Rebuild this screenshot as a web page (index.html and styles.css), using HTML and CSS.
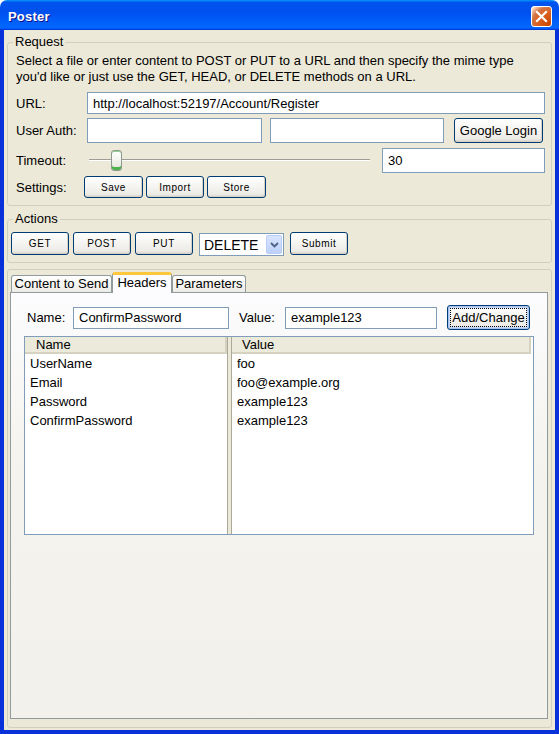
FILE: index.html
```html
<!DOCTYPE html>
<html lang="en">
<head>
<meta charset="utf-8">
<title>Poster</title>
<link rel="stylesheet" href="styles.css">
</head>
<body>
<div class="window">
  <div class="titlebar">
    <span class="title">Poster</span>
    <div class="close">
      <svg width="13" height="13" viewBox="0 0 13 13"><path d="M2 2 L11 11 M11 2 L2 11" stroke="#fff" stroke-width="2.2" stroke-linecap="square" fill="none"/></svg>
    </div>
  </div>
  <div class="frame">
    <fieldset class="group request">
      <legend class="legend-request">Request</legend>
      <p class="intro">Select a file or enter content to POST or PUT to a URL and then specify the mime type<br>you'd like or just use the GET, HEAD, or DELETE methods on a URL.</p>
      <div class="row url-row">
        <label class="lbl">URL:</label>
        <input class="field url-field" type="text" value="http://localhost:52197/Account/Register">
      </div>
      <div class="row auth-row">
        <label class="lbl">User Auth:</label>
        <input class="field auth1" type="text" value="">
        <input class="field auth2" type="text" value="">
        <button class="btn big google">Google Login</button>
      </div>
      <div class="row timeout-row">
        <label class="lbl">Timeout:</label>
        <div class="slider"><span class="thumb"></span></div>
        <input class="field timeout-field" type="text" value="30">
      </div>
      <div class="row settings-row">
        <label class="lbl lbl-settings">Settings:</label>
        <div class="btn-group">
          <button class="btn small w59">Save</button>
          <button class="btn small w58">Import</button>
          <button class="btn small w59">Store</button>
        </div>
      </div>
    </fieldset>

    <fieldset class="group actions">
      <legend class="legend-actions">Actions</legend>
      <div class="bar">
        <button class="btn act">GET</button>
        <button class="btn act">POST</button>
        <button class="btn act">PUT</button>
        <div class="combo">
          <span class="combo-text">DELETE</span>
          <span class="combo-arrow"><svg width="9" height="6" viewBox="0 0 9 6"><path d="M1 1 L4.5 4.5 L8 1" stroke="#4d6185" stroke-width="1.8" fill="none"/></svg></span>
        </div>
        <button class="btn act submit">Submit</button>
      </div>
    </fieldset>

    <div class="group tabs-group">
      <div class="tabs">
        <div class="tab tab-content">Content to Send</div>
        <div class="tab tab-headers active">Headers</div>
        <div class="tab tab-params">Parameters</div>
      </div>
      <div class="panel">
        <div class="name-row">
          <label class="plbl">Name:</label>
          <input class="field name-field" type="text" value="ConfirmPassword">
          <label class="plbl vlbl">Value:</label>
          <input class="field value-field" type="text" value="example123">
          <button class="btn big addchange">Add/Change</button>
        </div>
        <div class="list">
          <div class="col col-name">
            <div class="col-head">Name</div>
            <div class="cell">UserName</div>
            <div class="cell">Email</div>
            <div class="cell">Password</div>
            <div class="cell">ConfirmPassword</div>
          </div>
          <div class="splitter"></div>
          <div class="col col-value">
            <div class="col-head">Value</div>
            <div class="cell">foo</div>
            <div class="cell">foo@example.org</div>
            <div class="cell">example123</div>
            <div class="cell">example123</div>
          </div>
        </div>
      </div>
    </div>
  </div>
</div>
</body>
</html>
```

FILE: styles.css
```css
* { box-sizing: border-box; }
html, body { margin: 0; padding: 0; }
body {
  width: 559px;
  height: 734px;
  overflow: hidden;
  background: #ffffff;
  font-family: "Liberation Sans", Arial, sans-serif;
  font-size: 13px;
  color: #000;
}
.window {
  width: 559px;
  height: 734px;
  display: flex;
  flex-direction: column;
}
.titlebar {
  height: 30px;
  flex: none;
  display: flex;
  align-items: center;
  padding: 0 7px 0 8px;
  border-radius: 7px 7px 0 0;
  background: linear-gradient(180deg, #0997ff, #0053ee 8%, #0050ee 40%, #0066ff 88%, #0066ff 93%, #005bff 95%, #003dd7 96%, #003dd7);
}
.title {
  flex: 1;
  color: #fff;
  font-weight: bold;
  font-size: 13px;
  letter-spacing: 0.2px;
  text-shadow: 1px 1px #0f1089;
  margin-top: 3px;
}
.close {
  width: 21px;
  height: 21px;
  margin-top: 3px;
  border: 1px solid #fff;
  border-radius: 3px;
  display: flex;
  align-items: center;
  justify-content: center;
  background: radial-gradient(circle at 90% 90%, #cc4600 0%, #dc6527 55%, #cd7546 70%, #ffccb2 90%, #ffffff 100%);
}
.frame {
  flex: 1;
  display: flex;
  flex-direction: column;
  background: #ece9d8;
  border-style: solid;
  border-width: 0 4px 4px 4px;
  border-color: #0831d9;
  padding: 0 3px 2px 3px;
}

/* group boxes */
.group {
  margin: 0;
  min-width: 0;
  border: 1px solid #d0d0bf;
  border-radius: 3px;
}
.group legend {
  padding: 0 2px;
  line-height: 16px;
  font-size: 13px;
}
.legend-request { margin-left: -3px; }
.legend-actions { margin-left: 2px; }
.request {
  margin-top: 4px;
  padding: 3px 6px 7px 8px;
}
.intro {
  margin: 0;
  line-height: 16px;
}
.row {
  display: flex;
  align-items: center;
}
.lbl {
  width: 71px;
  flex: none;
}
.field {
  font-family: inherit;
  font-size: 13px;
  color: #000;
  border: 1px solid #7f9db9;
  background: #fff;
  margin: 0;
  padding: 0 5px;
  outline: none;
}
.url-row { margin-top: 7px; height: 22px; }
.url-field { flex: 1; height: 22px; }
.auth-row { margin-top: 4px; height: 25px; }
.auth1 { width: 175px; height: 25px; }
.auth2 { width: 174px; height: 25px; margin-left: 8px; }
.timeout-row { margin-top: 5px; height: 25px; }
.slider {
  flex: none;
  width: 295px;
  height: 25px;
  display: flex;
  align-items: center;
  padding-left: 24px;
  background:
    linear-gradient(#9d9c99, #9d9c99) no-repeat 2px 11px / 281px 1px,
    linear-gradient(#ffffff, #ffffff) no-repeat 2px 12px / 281px 1px;
}
.thumb {
  display: block;
  width: 11px;
  height: 21px;
  border: 1px solid #8e9a8e;
  border-radius: 3px;
  background: linear-gradient(180deg, #ffffff, #f0f0ea 60%, #e2e2da);
  box-shadow: inset 0 -3px #4cb34c, inset 0 1px #8fd18f;
}
.timeout-field { width: 163px; height: 25px; }
.settings-row { margin-top: 3px; height: 22px; }
.lbl-settings { width: 68px; }
.btn-group { display: flex; gap: 3px; }

/* buttons */
.btn {
  font-family: inherit;
  color: #000;
  margin: 0;
  padding: 0;
  border: 1px solid #003c74;
  border-radius: 3px;
  background: linear-gradient(180deg, #ffffff, #ecebe6 86%, #d6d0c5);
  box-shadow: inset -1px -1px #d6d0c5;
}
.small {
  font-size: 10px;
  letter-spacing: 0.5px;
  height: 22px;
}
.w59 { width: 59px; }
.w58 { width: 58px; }
.big { font-size: 13px; }
.google {
  width: 89px;
  height: 25px;
  margin-left: 10px;
}

/* actions */
.actions {
  margin-top: 5px;
  padding: 5px 6px 6px 3px;
}
.bar {
  display: flex;
  align-items: flex-start;
}
.act {
  width: 58px;
  height: 23px;
  font-size: 10px;
  letter-spacing: 0.6px;
  margin-right: 4px;
}
.combo {
  width: 85px;
  height: 23px;
  margin: 1px 6px 0 2px;
  border: 1px solid #7f9db9;
  background: #fff;
  display: flex;
  align-items: center;
  padding: 1px;
}
.combo-text {
  flex: 1;
  padding-left: 3px;
  font-size: 14px;
}
.combo-arrow {
  width: 16px;
  height: 19px;
  border: 1px solid #b9cdf6;
  border-radius: 2px;
  background: linear-gradient(180deg, #d9e5fd, #bcd0f8);
  display: flex;
  align-items: center;
  justify-content: center;
}
.submit { margin-right: 0; }

/* tabs */
.tabs-group {
  flex: 1;
  margin-top: 6px;
  margin-bottom: 0;
  display: flex;
  flex-direction: column;
  padding: 2px 3px 8px 2px;
}
.tabs {
  display: flex;
  align-items: flex-end;
  height: 20px;
  padding-left: 1px;
}
.tab {
  height: 17px;
  border: 1px solid #919b9c;
  border-bottom: none;
  border-radius: 3px 3px 0 0;
  background: linear-gradient(180deg, #ffffff, #f3f3ef 60%, #ecebe6);
  text-align: center;
  line-height: 16px;
  white-space: nowrap;
}
.tab-content { width: 101px; }
.tab-params { width: 74px; }
.tab-headers {
  width: 60px;
  height: 21px;
  margin-bottom: -1px;
  position: relative;
  z-index: 1;
  background: #fcfcfe;
  border-top: 3px solid #ffc83c;
  box-shadow: inset 0 -1px #fcfcfe;
  line-height: 15px;
}
.panel {
  flex: 1;
  border: 1px solid #919b9c;
  background: linear-gradient(180deg, #fcfcfe, #f4f3ee 40%, #f2f1ec);
  padding: 12px 13px 0 13px;
}
.name-row {
  display: flex;
  align-items: center;
  height: 25px;
  padding-left: 3px;
}
.plbl { width: 46px; flex: none; }
.name-field { width: 156px; height: 22px; }
.vlbl { margin-left: 10px; }
.value-field { width: 152px; height: 22px; }
.addchange {
  width: 83px;
  height: 25px;
  margin-left: 10px;
  box-shadow: inset 0 0 0 1px #a8c3ef, inset 0 0 0 2px #c6d8f7;
  outline: 1px dotted #000;
  outline-offset: -4px;
}
.list {
  width: 510px;
  height: 199px;
  margin-top: 6px;
  border: 1px solid #7f9db9;
  background: #fff;
  display: grid;
  grid-template-columns: 202px 5px 1fr;
}
.col {
  display: flex;
  flex-direction: column;
  min-width: 0;
}
.col-head {
  height: 17px;
  line-height: 15px;
  background: #ebeadb;
  border-bottom: 2px solid #d6d2c2;
  box-shadow: inset -2px 0 #d6d2c2;
}
.col-name .col-head { padding-left: 11px; }
.col-value .col-head { padding-left: 10px; margin-right: 2px; }
.cell {
  height: 19px;
  line-height: 19px;
  white-space: nowrap;
}
.col-name .cell { padding-left: 5px; }
.col-value .cell { padding-left: 5px; }
.splitter {
  background: #ece9d8;
  border-left: 1px solid #aca899;
  border-right: 1px solid #aca899;
}
```
